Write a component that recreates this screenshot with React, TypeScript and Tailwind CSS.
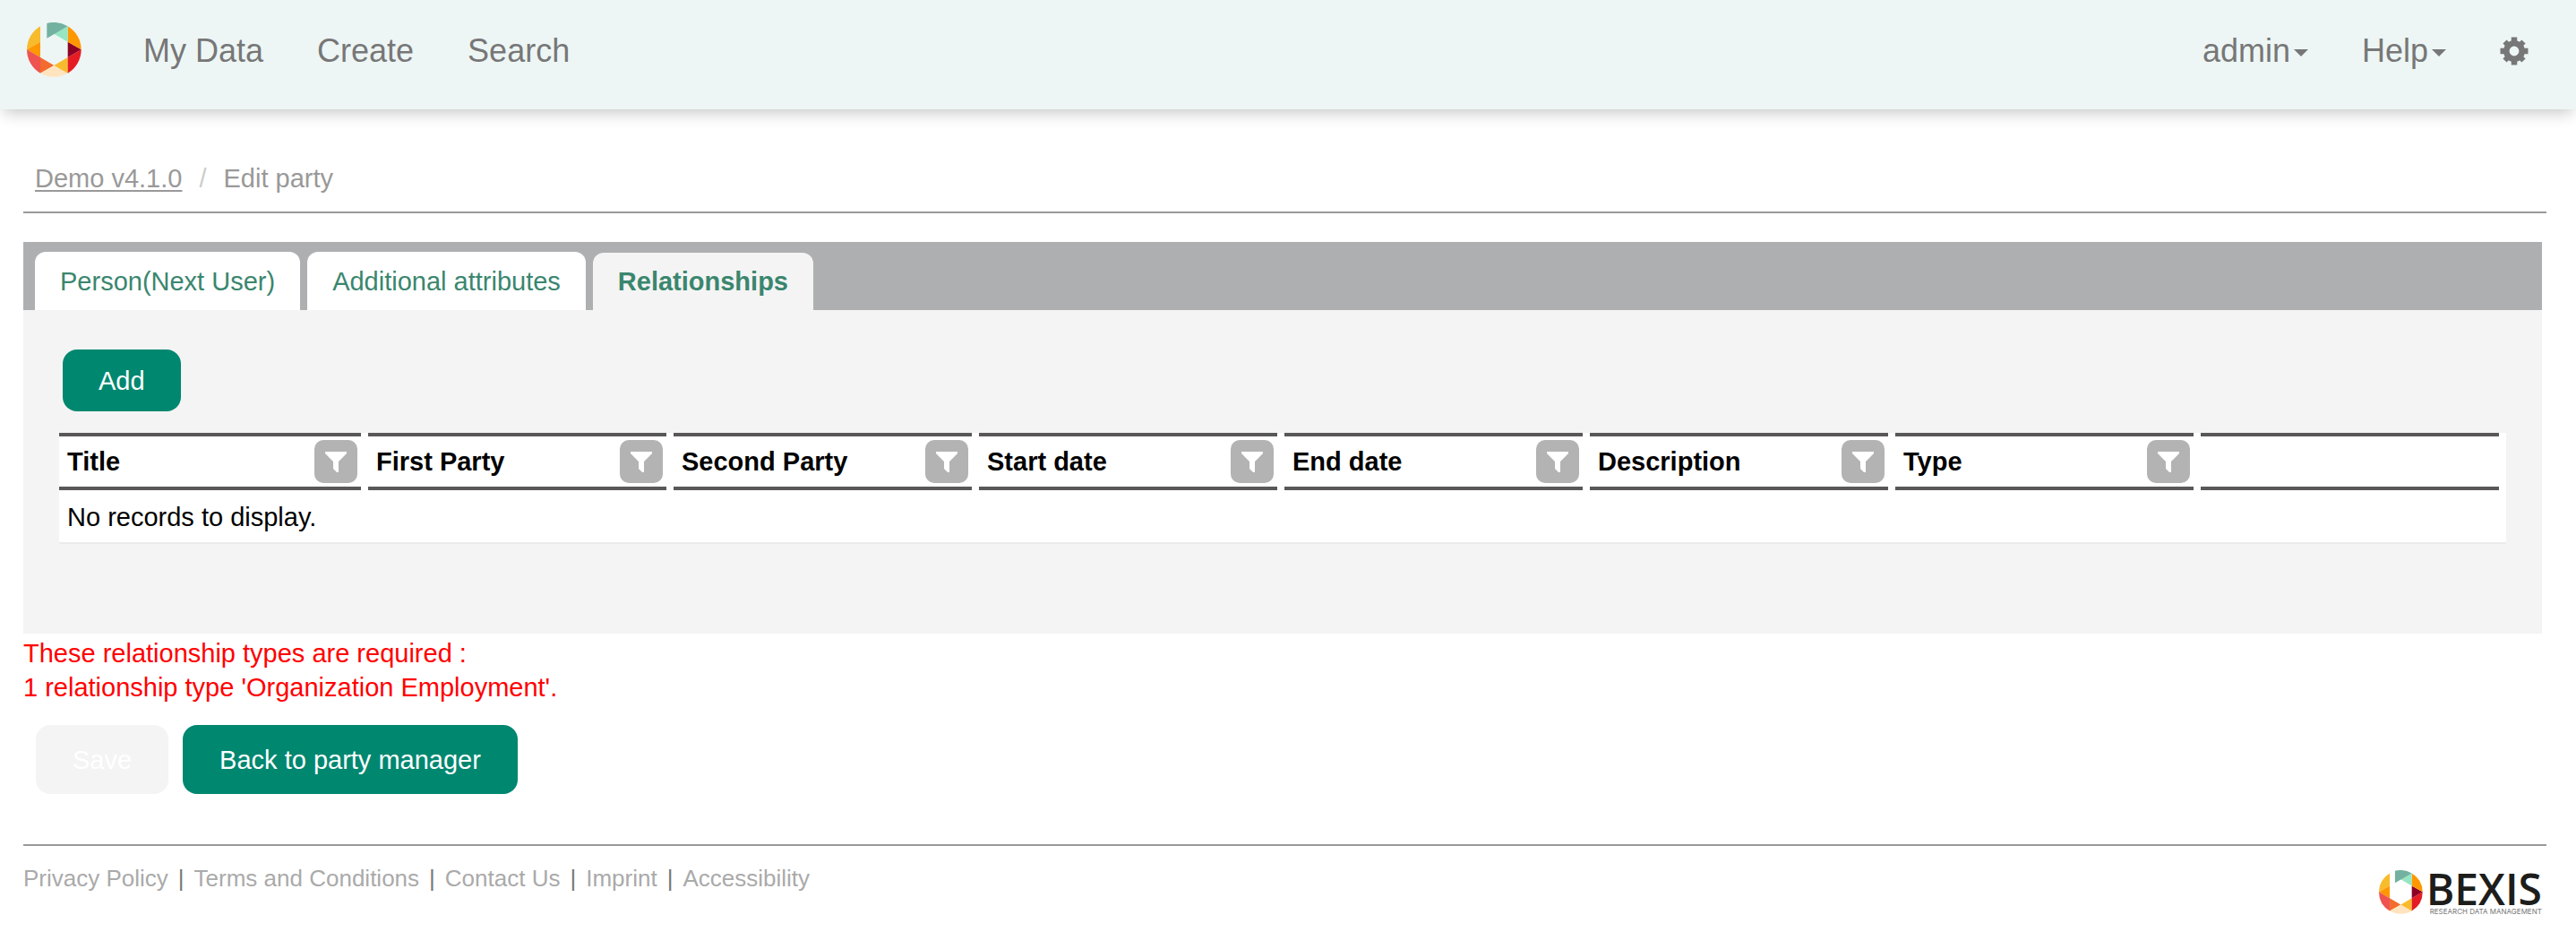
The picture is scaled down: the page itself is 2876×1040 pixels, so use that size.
import React from "react";

const columns = ["Title", "First Party", "Second Party", "Start date", "End date", "Description", "Type"];
const tabs = ["Person(Next User)", "Additional attributes", "Relationships"];
const footerLinks = ["Privacy Policy", "Terms and Conditions", "Contact Us", "Imprint", "Accessibility"];

function Emblem({ className }: { className: string }) {
  return (
    <svg viewBox="60 46 183 183" className={className} aria-hidden="true">
      <path fill="#f8bb2c" d="M105 59A91.5 91.5 0 0 0 60 137L105 111Z" />
      <path fill="#ff9700" d="M60 137L105 111V163Z" />
      <path fill="#ef534f" d="M60 137L105 163V216A91.5 91.5 0 0 1 60 137Z" />
      <path fill="#f36b2d" d="M105 163L151 190L105 216Z" />
      <path fill="#ffe4bf" d="M105 216L151 190L197 216A91.5 91.5 0 0 1 105 216Z" />
      <path fill="#f8bb2c" d="M151 190L197 163V216Z" />
      <path fill="#e51c24" d="M197 163L242 137A91.5 91.5 0 0 1 197 216Z" />
      <path fill="#8e0024" d="M197 111L242 137L197 163Z" />
      <path fill="#ff9700" d="M197 59A91.5 91.5 0 0 1 242 137L197 111Z" />
      <path fill="#97e5c1" d="M197 59V111L151 84Z" />
      <path fill="#73b1a0" d="M127 49A91.5 91.5 0 0 1 197 59L127 99Z" />
    </svg>
  );
}

function Caret() {
  return <span className="mt-1 ml-1 border-x-8 border-t-8 border-x-transparent border-t-[#777]" />;
}

function Cog() {
  return (
    <svg viewBox="0 0 32 32" className="size-8" fill="none" stroke="#777" aria-hidden="true">
      <circle cx="16" cy="16" r="8.700" strokeWidth="6.600" />
      <path strokeWidth="6.500" d="M16 .500V8M16 24v7.500M.500 16H8M24 16h7.500" />
      <path strokeWidth="6" d="M5.500 5.500L10 10M22 22l4.500 4.500M26.500 5.500L22 10M10 22l-4.500 4.500" />
    </svg>
  );
}

function FilterIcon() {
  return (
    <svg viewBox="0 0 24 23" className="h-[23px] w-6" fill="#fff" aria-hidden="true">
      <path d="M0 0h24v2l-9 9v12h-2l-4-4v-8L0 2z" />
    </svg>
  );
}

export default function App() {
  return (
    <div className="bg-white font-['Liberation_Sans',Arial,sans-serif] text-[29px] leading-[38px] text-black">
      <header className="flex h-[122px] items-start justify-between bg-[#edf6f5] pr-[53px] pl-[30px] text-[36px] leading-[50px] text-[#777] shadow-[0_8px_16px_-4px_rgba(0,0,0,0.22)]">
        <nav className="flex pt-[25px]">
          <a href="#home" aria-label="Home" className="mr-[39px]">
            <Emblem className="size-[61px]" />
          </a>
          <div className="flex pt-[7px]">
            <a href="#data" className="px-[30px]">My Data</a>
            <a href="#create" className="px-[30px]">Create</a>
            <a href="#search" className="px-[30px]">Search</a>
          </div>
        </nav>
        <nav className="flex pt-8">
          <button className="flex items-center px-[30px]">admin<Caret /></button>
          <button className="flex items-center px-[30px]">Help<Caret /></button>
          <button aria-label="Settings" className="flex items-center pl-[30px]"><Cog /></button>
        </nav>
      </header>

      <main className="pr-[38px] pl-[26px]">
        <nav aria-label="Breadcrumb" className="-mr-[5px] flex border-b-2 border-[#999] pt-[58px] pb-[18px] pl-[13px] text-[#999]">
          <a href="#home" className="underline decoration-2 underline-offset-3">Demo v4.1.0</a>
          <span className="px-[19px] text-[#ccc]">/</span>
          <span>Edit party</span>
        </nav>

        <div role="tablist" className="mt-8 flex h-[76px] items-end gap-2 bg-[#aeafb1] px-[13px]">
          {tabs.map((tab, i) => (
            <button
              key={tab}
              role="tab"
              aria-selected={i === 2}
              className={
                i === 2
                  ? "h-16 rounded-t-xl bg-[#f4f4f4] px-7 font-bold text-[#3a866e]"
                  : "h-[65px] rounded-t-xl bg-white px-7 text-[#3a866e]"
              }
            >
              {tab}
            </button>
          ))}
        </div>

        <section className="bg-[#f4f4f4] px-10 pt-11 pb-[100px]">
          <button className="ml-1 block h-[69px] rounded-2xl bg-[#008770] px-10 text-white">Add</button>
          <table className="mt-6 w-full table-fixed border-separate border-spacing-0 bg-white text-left">
            <thead>
              <tr>
                {columns.map((name) => (
                  <th key={name} className="p-0 pr-2 font-bold first:w-[345px]">
                    <div className="flex h-16 items-center justify-between border-y-4 border-[#595757] pr-1 pl-[9px]">
                      {name}
                      <button aria-label={"Filter " + name} className="flex size-12 items-center justify-center rounded-[10px] bg-[#b3b3b3]">
                        <FilterIcon />
                      </button>
                    </div>
                  </th>
                ))}
                <th className="p-0 pr-2">
                  <div className="h-16 border-y-4 border-[#595757]" />
                </th>
              </tr>
            </thead>
            <tbody>
              <tr>
                <td colSpan={8} className="h-[60px] border-b-2 border-[#ebebeb] px-[9px] pt-[2px] pb-0">No records to display.</td>
              </tr>
            </tbody>
          </table>
        </section>

        <p className="pt-[3px] text-[#ff0000]">
          These relationship types are required :<br />1 relationship type 'Organization Employment'.
        </p>

        <div className="flex gap-4 pt-[23px] pl-[14px]">
          <button disabled className="h-[77px] rounded-2xl bg-[#f4f4f4] px-[41px] text-white">Save</button>
          <button className="h-[77px] rounded-2xl bg-[#008770] px-[41px] text-white">Back to party manager</button>
        </div>

        <footer className="mt-14 -mr-[5px] flex items-start justify-between border-t-2 border-[#999] pr-[5px] text-[26px] text-[#aaa]">
          <nav aria-label="Footer" className="flex pt-[17px]">
            {footerLinks.map((name, i) => (
              <React.Fragment key={name}>
                {i > 0 && <span className="px-[11px] text-[#777]">|</span>}
                <a href="#footer">{name}</a>
              </React.Fragment>
            ))}
          </nav>
          <div className="flex gap-1 pt-[27px] font-['Open_Sans',sans-serif]">
            <Emblem className="size-[49px]" />
            <div>
              <div className="text-[48px] leading-[42px] font-semibold text-[#1d1d1b]">BEXIS</div>
              <div className="pl-1 font-['Inter',sans-serif] text-[8px] leading-[8px] text-[#777]">RESEARCH DATA MANAGEMENT</div>
            </div>
          </div>
        </footer>
      </main>
    </div>
  );
}
